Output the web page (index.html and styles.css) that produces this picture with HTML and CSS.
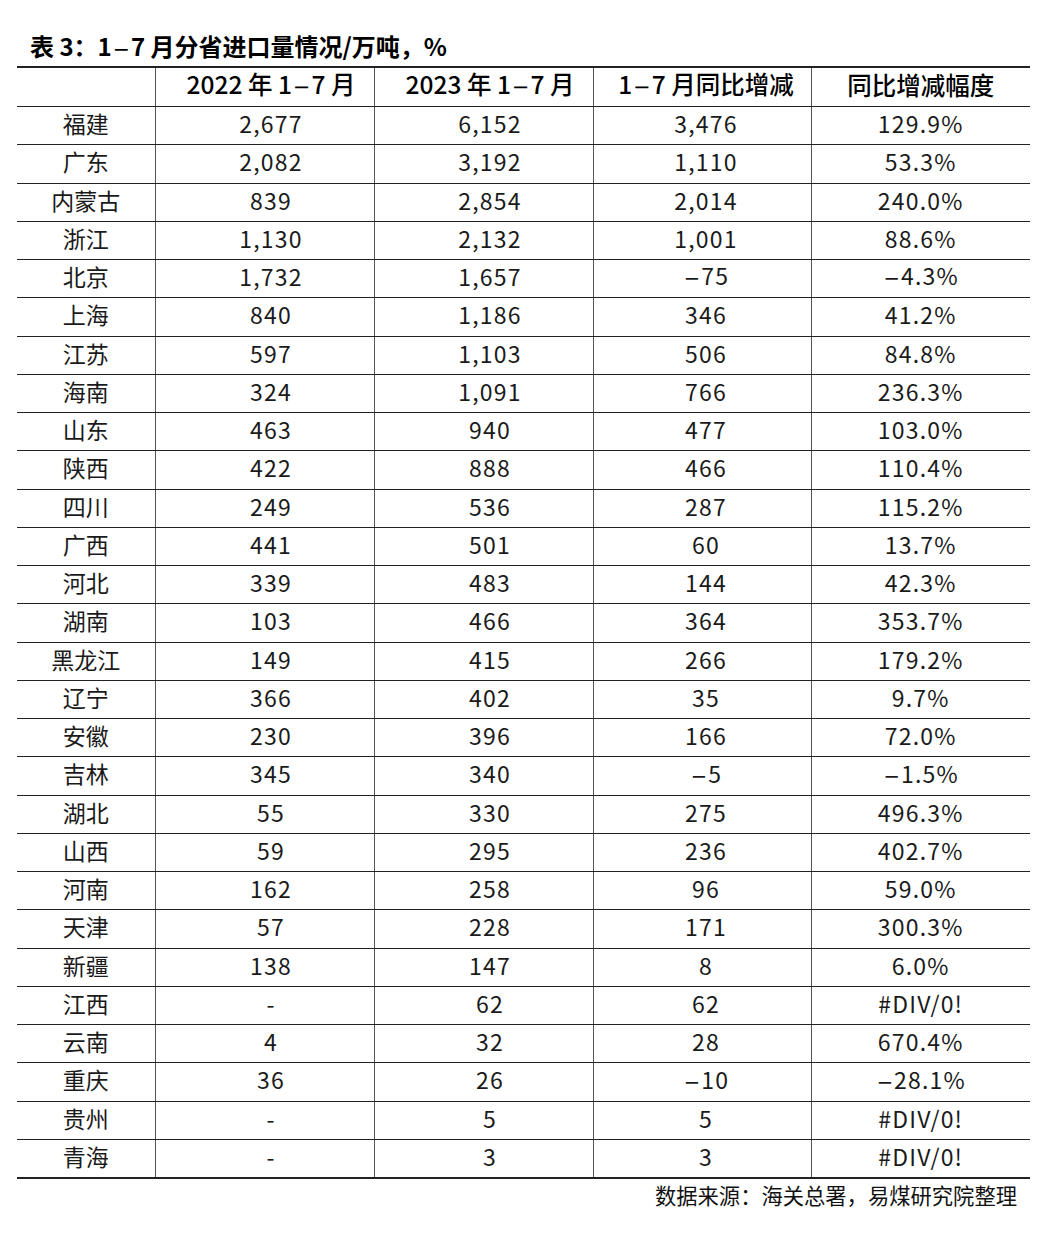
FILE: index.html
```html
<!DOCTYPE html>
<html lang="zh-CN">
<head>
<meta charset="utf-8">
<link rel="stylesheet" href="styles.css">
</head>
<body>
<div class="page">
  <div class="title">表 3：1<span class="dash">−</span>7 月分省进口量情况/万吨，%</div>
  <table class="data">
    <colgroup>
      <col class="c0"><col class="c1"><col class="c2"><col class="c3"><col class="c4">
    </colgroup>
    <thead>
      <tr><th></th><th>2022 年 1<span class="dash">−</span>7 月</th><th>2023 年 1<span class="dash">−</span>7 月</th><th>1<span class="dash">−</span>7 月同比增减</th><th>同比增减幅度</th></tr>
    </thead>
    <tbody>
      <tr><td>福建</td><td>2,677</td><td>6,152</td><td>3,476</td><td>129.9%</td></tr>
      <tr><td>广东</td><td>2,082</td><td>3,192</td><td>1,110</td><td>53.3%</td></tr>
      <tr><td>内蒙古</td><td>839</td><td>2,854</td><td>2,014</td><td>240.0%</td></tr>
      <tr><td>浙江</td><td>1,130</td><td>2,132</td><td>1,001</td><td>88.6%</td></tr>
      <tr><td>北京</td><td>1,732</td><td>1,657</td><td><span class="dash">−</span>75</td><td><span class="dash">−</span>4.3%</td></tr>
      <tr><td>上海</td><td>840</td><td>1,186</td><td>346</td><td>41.2%</td></tr>
      <tr><td>江苏</td><td>597</td><td>1,103</td><td>506</td><td>84.8%</td></tr>
      <tr><td>海南</td><td>324</td><td>1,091</td><td>766</td><td>236.3%</td></tr>
      <tr><td>山东</td><td>463</td><td>940</td><td>477</td><td>103.0%</td></tr>
      <tr><td>陕西</td><td>422</td><td>888</td><td>466</td><td>110.4%</td></tr>
      <tr><td>四川</td><td>249</td><td>536</td><td>287</td><td>115.2%</td></tr>
      <tr><td>广西</td><td>441</td><td>501</td><td>60</td><td>13.7%</td></tr>
      <tr><td>河北</td><td>339</td><td>483</td><td>144</td><td>42.3%</td></tr>
      <tr><td>湖南</td><td>103</td><td>466</td><td>364</td><td>353.7%</td></tr>
      <tr><td>黑龙江</td><td>149</td><td>415</td><td>266</td><td>179.2%</td></tr>
      <tr><td>辽宁</td><td>366</td><td>402</td><td>35</td><td>9.7%</td></tr>
      <tr><td>安徽</td><td>230</td><td>396</td><td>166</td><td>72.0%</td></tr>
      <tr><td>吉林</td><td>345</td><td>340</td><td><span class="dash">−</span>5</td><td><span class="dash">−</span>1.5%</td></tr>
      <tr><td>湖北</td><td>55</td><td>330</td><td>275</td><td>496.3%</td></tr>
      <tr><td>山西</td><td>59</td><td>295</td><td>236</td><td>402.7%</td></tr>
      <tr><td>河南</td><td>162</td><td>258</td><td>96</td><td>59.0%</td></tr>
      <tr><td>天津</td><td>57</td><td>228</td><td>171</td><td>300.3%</td></tr>
      <tr><td>新疆</td><td>138</td><td>147</td><td>8</td><td>6.0%</td></tr>
      <tr><td>江西</td><td>-</td><td>62</td><td>62</td><td>#DIV/0!</td></tr>
      <tr><td>云南</td><td>4</td><td>32</td><td>28</td><td>670.4%</td></tr>
      <tr><td>重庆</td><td>36</td><td>26</td><td><span class="dash">−</span>10</td><td><span class="dash">−</span>28.1%</td></tr>
      <tr><td>贵州</td><td>-</td><td>5</td><td>5</td><td>#DIV/0!</td></tr>
      <tr><td>青海</td><td>-</td><td>3</td><td>3</td><td>#DIV/0!</td></tr>
    </tbody>
  </table>
  <div class="source">数据来源：海关总署，易煤研究院整理</div>
</div>
</body>
</html>
```
FILE: styles.css
```css
html, body {
  margin: 0;
  padding: 0;
  background: #ffffff;
}
body {
  font-family: "Noto Sans CJK SC", "Noto Sans", sans-serif;
  color: #111111;
}
.page {
  padding: 31px 0 0 17px;
  width: 1013px;
}
.title {
  font-size: 24px;
  font-weight: 700;
  line-height: 30px;
  padding-left: 13px;
  height: 35px;
  color: #000;
}
.dash {
  font-family: "DejaVu Sans", sans-serif;
  font-size: 0.85em;
  font-weight: 400;
  letter-spacing: 0;
  padding: 0 1px;
}
.data {
  border-collapse: collapse;
  width: 1013px;
  table-layout: fixed;
  font-size: 23px;
}
.c0 { width: 138px; }
.c1 { width: 219px; }
.c2 { width: 219px; }
.c3 { width: 218px; }
.c4 { width: 219px; }
.data th, .data td {
  padding: 0 0 4px 0;
  text-align: center;
  vertical-align: middle;
  border-top: 1px solid #222;
  border-bottom: 1px solid #222;
  border-left: 1px solid #555;
  border-right: 1px solid #555;
  line-height: 1;
}
.data th:nth-child(2), .data td:nth-child(2),
.data th:nth-child(3), .data td:nth-child(3) { padding-left: 13px; }
.data th:nth-child(4), .data td:nth-child(4) { padding-left: 8px; }
.data th:first-child, .data td:first-child { border-left: none; }
.data th:last-child, .data td:last-child { border-right: none; }
.data th {
  height: 34px;
  font-weight: 500;
  font-size: 24.5px;
  color: #000;
}
.data td {
  height: 33.25px;
  font-weight: 400;
  letter-spacing: 1.2px;
  color: #1a1a1a;
}
.data td:first-child { letter-spacing: 0; }
.data thead tr th { border-top: 2px solid #222; }
.data tbody tr:last-child td { border-bottom: 2px solid #222; }
.source {
  text-align: right;
  padding-right: 13px;
  font-size: 21.3px;
  line-height: 28px;
  margin-top: 2px;
  color: #111;
}
```
